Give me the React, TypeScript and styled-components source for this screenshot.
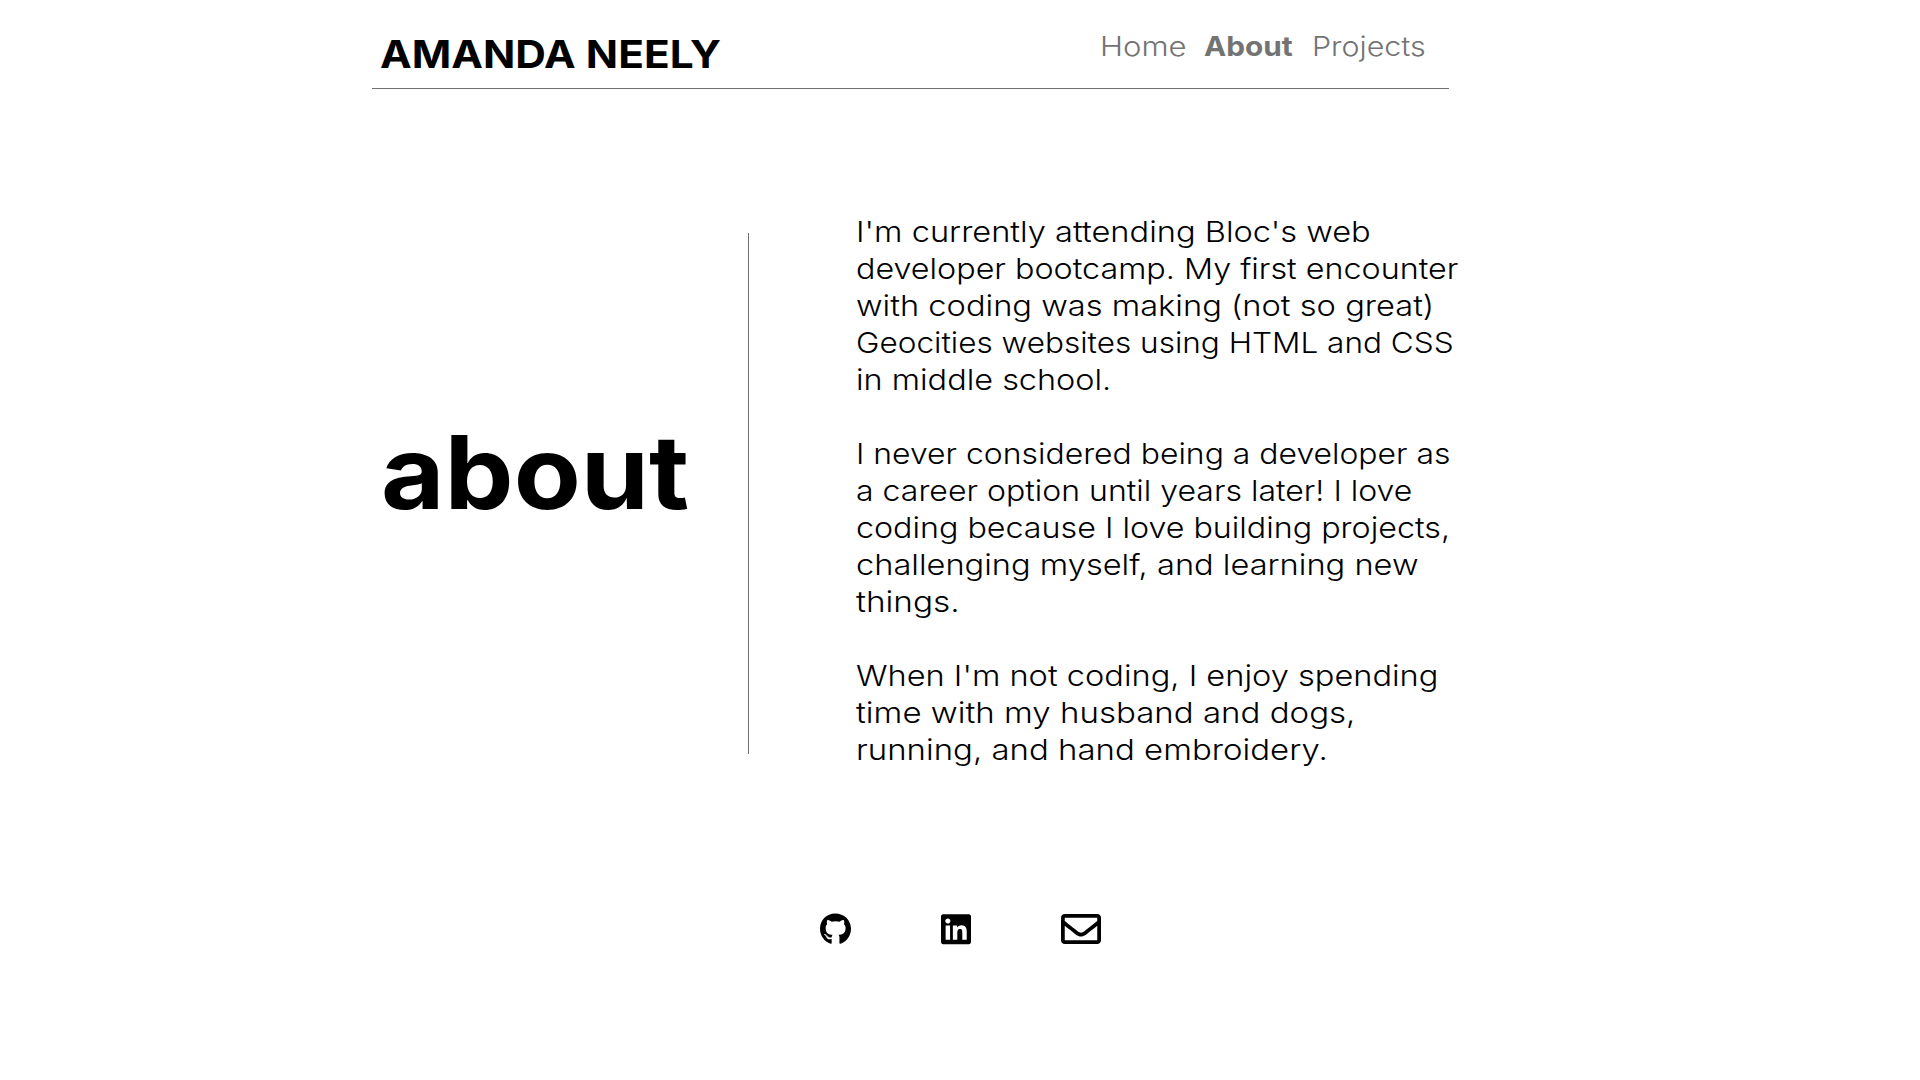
import React from 'react';
import styled, { createGlobalStyle } from 'styled-components';
import { FaGithub, FaLinkedin, FaRegEnvelope } from 'react-icons/fa';

const GlobalStyle = createGlobalStyle`
  * { box-sizing: border-box; }
  body {
    margin: 0;
    background: #fff;
    color: #000;
    font-family: Inter, "Open Sans", sans-serif;
  }
  h1, h2, p { margin: 0; }
  a { color: inherit; text-decoration: none; }
`;

const Page = styled.div`
  width: 1101px;
  margin-left: 372px;
`;

const Header = styled.header`
  display: flex;
  justify-content: space-between;
  align-items: flex-start;
  width: 1077px;
  height: 89px;
  padding: 29px 22px 0 7.7px;
  border-bottom: 1px solid #707070;
`;

const SiteTitle = styled.h1`
  margin-top: 1px;
  font-size: 38.5px;
  line-height: 48px;
  font-weight: 700;
  white-space: nowrap;
  transform: scaleX(1.102);
  transform-origin: 0 0;
`;

const Nav = styled.nav`
  display: grid;
  grid-template-columns: 104.3px 107.5px 115.5px;
  color: #737373;
`;

const NavLink = styled.a<{ $active?: boolean; $stretch: number }>`
  font-size: 27.5px;
  line-height: 34px;
  font-weight: ${(p) => (p.$active ? 700 : 300)};
  white-space: nowrap;
  justify-self: start;
  transform: scaleX(${(p) => p.$stretch});
  transform-origin: 0 0;
`;

const Main = styled.main`
  display: grid;
  grid-template-columns: 376px 1px 1fr;
  padding-top: 124px;
`;

const SectionTitle = styled.h2`
  justify-self: start;
  align-self: start;
  margin: 197.5px 0 0 8.5px;
  font-size: 102px;
  line-height: 122px;
  font-weight: 700;
  transform: scaleX(1.074);
  transform-origin: 0 0;
`;

const Divider = styled.div`
  height: 521px;
  margin-top: 20px;
  background: #707070;
`;

const Bio = styled.div`
  display: flex;
  flex-direction: column;
  gap: 37px;
  padding-left: 106.5px;
`;

const Paragraph = styled.p`
  display: flex;
  flex-direction: column;
  align-items: flex-start;
  font-size: 29px;
  line-height: 37px;
  font-weight: 300;
`;

const Line = styled.span<{ $stretch: number }>`
  white-space: nowrap;
  transform: scaleX(${(p) => p.$stretch});
  transform-origin: 0 0;
`;

const Footer = styled.footer`
  display: flex;
  align-items: center;
  gap: 90px;
  height: 40px;
  margin: 141px 0 0 448px;
`;

const IconLink = styled.a<{ $width: number; $height: number }>`
  display: block;
  svg {
    display: block;
    width: ${(p) => p.$width}px;
    height: ${(p) => p.$height}px;
  }
`;

const bio: [string, number][][] = [
  [
    ["I'm currently attending Bloc's web", 1.124],
    ['developer bootcamp. My first encounter', 1.113],
    ['with coding was making (not so great)', 1.125],
    ['Geocities websites using HTML and CSS', 1.087],
    ['in middle school.', 1.118],
  ],
  [
    ['I never considered being a developer as', 1.1],
    ['a career option until years later! I love', 1.104],
    ['coding because I love building projects,', 1.111],
    ['challenging myself, and learning new', 1.124],
    ['things.', 1.149],
  ],
  [
    ["When I'm not coding, I enjoy spending", 1.123],
    ['time with my husband and dogs,', 1.139],
    ['running, and hand embroidery.', 1.136],
  ],
];

export default function App() {
  return (
    <>
      <GlobalStyle />
      <Page>
        <Header>
          <SiteTitle>AMANDA NEELY</SiteTitle>
          <Nav>
            <NavLink href="#home" $stretch={1.13}>Home</NavLink>
            <NavLink href="#about" $active $stretch={1.083}>About</NavLink>
            <NavLink href="#projects" $stretch={1.105}>Projects</NavLink>
          </Nav>
        </Header>
        <Main>
          <SectionTitle>about</SectionTitle>
          <Divider />
          <Bio>
            {bio.map((lines, i) => (
              <Paragraph key={i}>
                {lines.map(([text, stretch]) => (
                  <Line key={text} $stretch={stretch}>{text}</Line>
                ))}
              </Paragraph>
            ))}
          </Bio>
        </Main>
        <Footer>
          <IconLink href="#github" $width={31} $height={32}><FaGithub /></IconLink>
          <IconLink href="#linkedin" $width={30} $height={34.3}><FaLinkedin /></IconLink>
          <IconLink href="#email" $width={40} $height={40}><FaRegEnvelope /></IconLink>
        </Footer>
      </Page>
    </>
  );
}
